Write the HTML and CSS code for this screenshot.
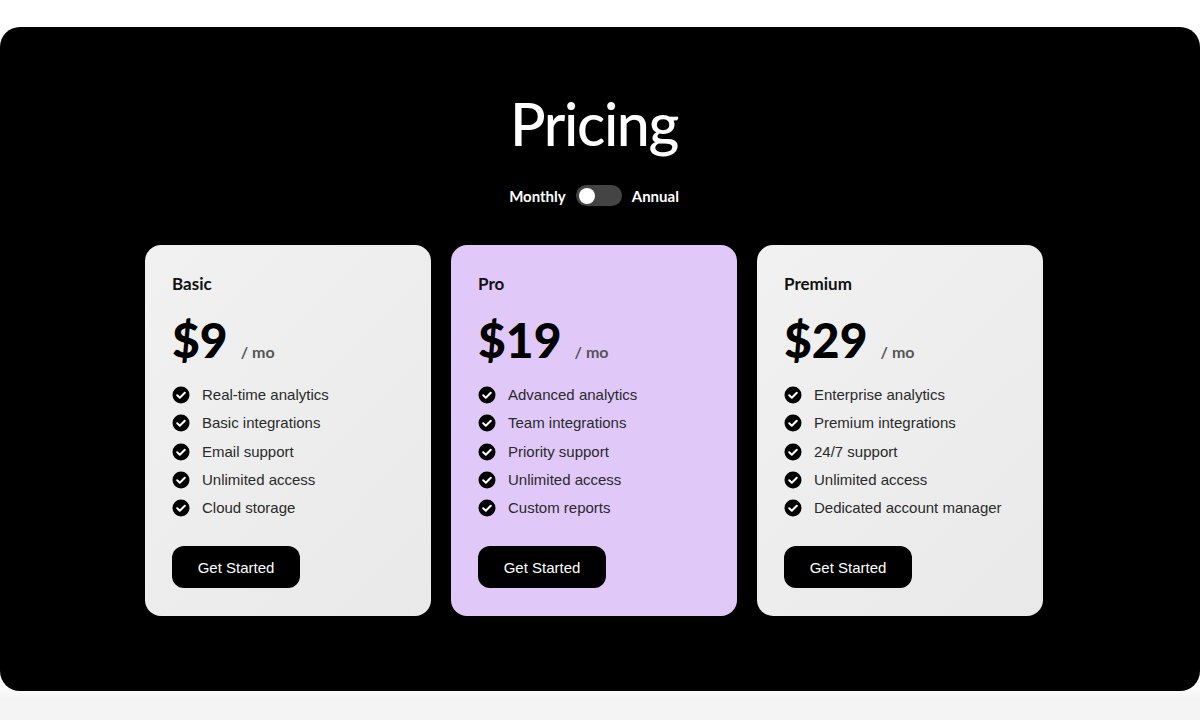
FILE: index.html
```html
<!DOCTYPE html>
<html lang="en">
<head>
<meta charset="utf-8">
<title>Pricing</title>
<link rel="stylesheet" href="styles.css">
</head>
<body>
<main class="panel">
  <h1 class="title">Pricing</h1>
  <div class="billing">
    <span class="billing-label">Monthly</span>
    <span class="switch"><span class="knob"></span></span>
    <span class="billing-label">Annual</span>
  </div>
  <section class="plans">
    <article class="plan">
      <h2 class="plan-name">Basic</h2>
      <div class="price"><span class="amount">$9</span><span class="per">/ mo</span></div>
      <ul class="features">
        <li><svg class="check" viewBox="0 0 18 18"><circle cx="9" cy="9" r="8.5"/><path d="M5.2 9.2l2.6 2.5 5-5"/></svg>Real-time analytics</li>
        <li><svg class="check" viewBox="0 0 18 18"><circle cx="9" cy="9" r="8.5"/><path d="M5.2 9.2l2.6 2.5 5-5"/></svg>Basic integrations</li>
        <li><svg class="check" viewBox="0 0 18 18"><circle cx="9" cy="9" r="8.5"/><path d="M5.2 9.2l2.6 2.5 5-5"/></svg>Email support</li>
        <li><svg class="check" viewBox="0 0 18 18"><circle cx="9" cy="9" r="8.5"/><path d="M5.2 9.2l2.6 2.5 5-5"/></svg>Unlimited access</li>
        <li><svg class="check" viewBox="0 0 18 18"><circle cx="9" cy="9" r="8.5"/><path d="M5.2 9.2l2.6 2.5 5-5"/></svg>Cloud storage</li>
      </ul>
      <button class="cta">Get Started</button>
    </article>
    <article class="plan plan-pro">
      <h2 class="plan-name">Pro</h2>
      <div class="price"><span class="amount">$19</span><span class="per">/ mo</span></div>
      <ul class="features">
        <li><svg class="check" viewBox="0 0 18 18"><circle cx="9" cy="9" r="8.5"/><path d="M5.2 9.2l2.6 2.5 5-5"/></svg>Advanced analytics</li>
        <li><svg class="check" viewBox="0 0 18 18"><circle cx="9" cy="9" r="8.5"/><path d="M5.2 9.2l2.6 2.5 5-5"/></svg>Team integrations</li>
        <li><svg class="check" viewBox="0 0 18 18"><circle cx="9" cy="9" r="8.5"/><path d="M5.2 9.2l2.6 2.5 5-5"/></svg>Priority support</li>
        <li><svg class="check" viewBox="0 0 18 18"><circle cx="9" cy="9" r="8.5"/><path d="M5.2 9.2l2.6 2.5 5-5"/></svg>Unlimited access</li>
        <li><svg class="check" viewBox="0 0 18 18"><circle cx="9" cy="9" r="8.5"/><path d="M5.2 9.2l2.6 2.5 5-5"/></svg>Custom reports</li>
      </ul>
      <button class="cta">Get Started</button>
    </article>
    <article class="plan">
      <h2 class="plan-name">Premium</h2>
      <div class="price"><span class="amount">$29</span><span class="per">/ mo</span></div>
      <ul class="features">
        <li><svg class="check" viewBox="0 0 18 18"><circle cx="9" cy="9" r="8.5"/><path d="M5.2 9.2l2.6 2.5 5-5"/></svg>Enterprise analytics</li>
        <li><svg class="check" viewBox="0 0 18 18"><circle cx="9" cy="9" r="8.5"/><path d="M5.2 9.2l2.6 2.5 5-5"/></svg>Premium integrations</li>
        <li><svg class="check" viewBox="0 0 18 18"><circle cx="9" cy="9" r="8.5"/><path d="M5.2 9.2l2.6 2.5 5-5"/></svg>24/7 support</li>
        <li><svg class="check" viewBox="0 0 18 18"><circle cx="9" cy="9" r="8.5"/><path d="M5.2 9.2l2.6 2.5 5-5"/></svg>Unlimited access</li>
        <li><svg class="check" viewBox="0 0 18 18"><circle cx="9" cy="9" r="8.5"/><path d="M5.2 9.2l2.6 2.5 5-5"/></svg>Dedicated account manager</li>
      </ul>
      <button class="cta">Get Started</button>
    </article>
  </section>
</main>
</body>
</html>
```
FILE: styles.css
```css
* { box-sizing: border-box; }
html, body { margin: 0; padding: 0; }
body {
  height: 720px;
  overflow: hidden;
  padding-top: 27px;
  background: linear-gradient(#ffffff 0, #ffffff 680px, #f4f4f4 700px);
  font-family: "Liberation Sans", Arial, sans-serif;
}
.panel {
  height: 664px;
  background: #000;
  border-radius: 20px;
  display: flex;
  flex-direction: column;
  align-items: center;
  padding-top: 67px;
  padding-right: 12px;
}
.title {
  margin: 0;
  color: #fff;
  font-family: "Lato", sans-serif;
  font-weight: 500;
  font-size: 59px;
  line-height: 60px;
  letter-spacing: -1.4px;
}
.billing {
  display: flex;
  align-items: center;
  gap: 10px;
  margin-top: 31px;
}
.billing-label {
  color: #fff;
  font-family: "Lato", sans-serif;
  font-weight: 700;
  font-size: 15px;
}
.switch {
  width: 46px;
  height: 21px;
  border-radius: 11px;
  background: #444;
  display: flex;
  align-items: center;
  padding: 0 3px;
}
.knob {
  width: 16px;
  height: 16px;
  border-radius: 50%;
  background: #fff;
}
.plans {
  display: flex;
  gap: 20px;
  margin-top: 39px;
}
.plan {
  width: 286px;
  height: 371px;
  border-radius: 16px;
  background: linear-gradient(135deg, #f1f1f1, #e9e9e9);
  padding: 28px 27px 28px 27px;
  display: flex;
  flex-direction: column;
  align-items: flex-start;
}
.plan-pro { background: #e0c9f9; }
.plan-name {
  margin: 0;
  font-family: "Lato", sans-serif;
  font-weight: 700;
  font-size: 17px;
  line-height: 22px;
  color: #111;
}
.price {
  display: flex;
  align-items: baseline;
  margin-top: 17px;
}
.amount {
  font-family: "Lato", sans-serif;
  font-weight: 900;
  font-size: 48px;
  line-height: 56px;
  color: #000;
}
.per {
  margin-left: 13px;
  font-family: "Lato", sans-serif;
  font-weight: 700;
  font-size: 16px;
  color: #555;
}
.features {
  list-style: none;
  margin: 18px 0 0;
  padding: 0;
  display: flex;
  flex-direction: column;
  gap: 10px;
}
.features li {
  display: flex;
  align-items: center;
  gap: 12px;
  font-size: 15px;
  line-height: 18.3px;
  color: #2a2a2a;
}
.check {
  width: 18px;
  height: 18px;
  flex: none;
}
.check circle { fill: #000; }
.check path {
  fill: none;
  stroke: #fff;
  stroke-width: 2;
  stroke-linecap: round;
  stroke-linejoin: round;
}
.cta {
  margin-top: auto;
  width: 128px;
  height: 42px;
  border: 0;
  border-radius: 12px;
  background: #000;
  color: #fff;
  font-family: "Liberation Sans", Arial, sans-serif;
  font-size: 15px;
}
```
